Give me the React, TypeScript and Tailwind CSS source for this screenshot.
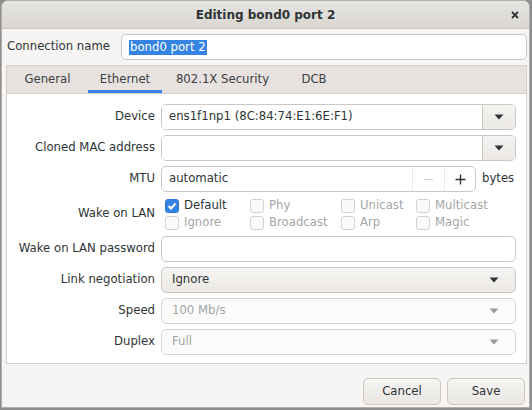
import React from "react";

const font = { fontFamily: '"DejaVu Sans", "Liberation Sans", sans-serif' };

const Arrow = ({ grey }: { grey?: boolean }) => (
  <svg width="10" height="6" viewBox="0 0 10 6">
    <path d="M0.5 0.5 L9.5 0.5 L5 5.5 Z" fill={grey ? "#9a9a98" : "#2e3436"} />
  </svg>
);

const Check = ({ on, label, disabled }: { on?: boolean; label: string; disabled?: boolean }) => (
  <div className="flex items-center gap-[5px] h-[17px]">
    {on ? (
      <div className="w-[14px] h-[14px] rounded-[3px] bg-[#3584e4] border border-[#2a76d6] flex items-center justify-center">
        <svg width="10" height="10" viewBox="0 0 10 10">
          <path d="M1.5 5 L4 7.5 L8.5 2.5" stroke="white" strokeWidth="2" fill="none" />
        </svg>
      </div>
    ) : (
      <div className="w-[14px] h-[14px] rounded-[3px] bg-[#fafafa] border border-[#d6d1cd]" />
    )}
    <span className={disabled ? "text-[#a3a6a6]" : "text-[#2e3436]"}>{label}</span>
  </div>
);

const Label = ({ children }: { children: React.ReactNode }) => (
  <div className="flex items-center justify-end text-[#2e3436]">{children}</div>
);

const tabs = [
  { name: "General", w: "w-[81px]" },
  { name: "Ethernet", w: "w-[74px]" },
  { name: "802.1X Security", w: "w-[121px]" },
  { name: "DCB", w: "w-[62px]" },
];

export default function App() {
  return (
    <div className="w-[532px] h-[410px] bg-[#8e8e8e] overflow-hidden text-[11.7px]" style={font}>
      <div className="ml-[1px] w-[529px] h-[408px] rounded-t-[7px] border border-[#b3aeaa] bg-[#f6f5f4] flex flex-col overflow-hidden">
        {/* title bar */}
        <div className="h-[28px] shrink-0 relative flex items-center justify-center bg-gradient-to-b from-[#e6e4e1] to-[#dad7d2] border-b border-[#c9c5c0]">
          <span className="font-bold text-[#2e3436] text-[12px]">Editing bond0 port 2</span>
          <svg className="absolute right-[10px] top-[10px]" width="8" height="8" viewBox="0 0 8 8">
            <path d="M1 1 L7 7 M7 1 L1 7" stroke="#2e3436" strokeWidth="1.8" />
          </svg>
        </div>

        <div className="flex-1 flex flex-col pl-[4px] pr-[2px]">
          {/* connection name */}
          <div className="mt-[5px] flex items-center h-[26px]">
            <div className="w-[115px] pl-[1px] text-[#2e3436]">Connection name</div>
            <div className="flex-1 h-[26px] rounded-[5px] border border-[#cdc7c2] bg-white flex items-center pl-[7px]">
              <span className="bg-[#3584e4] text-white leading-[15px] px-[1px]">bond0 port 2</span>
            </div>
          </div>

          {/* notebook */}
          <div className="mt-[5px] h-[299px] border border-[#d3cdcb] flex flex-col">
            <div className="h-[28px] shrink-0 bg-[#e7e1e0] border-b border-[#d3cdcb] flex">
              {tabs.map((t, i) => (
                <div
                  key={t.name}
                  className={`${t.w} h-full flex items-center justify-center text-[#3d4244] ${
                    i === 1 ? "border-b-[3px] border-[#3584e4] pt-[3px]" : ""
                  }`}
                >
                  {t.name}
                </div>
              ))}
            </div>

            <div className="flex-1 bg-white pt-[10px] pr-[10px] grid grid-cols-[148px_1fr] gap-x-[6px] gap-y-[5px] content-start">
              <Label>Device</Label>
              <div className="h-[26px] flex rounded-[5px] border border-[#cdc7c2] overflow-hidden">
                <div className="flex-1 bg-white flex items-center pl-[7px] text-[#2e3436]">ens1f1np1 (8C:84:74:E1:6E:F1)</div>
                <div className="w-[33px] border-l border-[#cdc7c2] bg-gradient-to-b from-[#f5f4f2] to-[#ebe8e5] flex items-center justify-center">
                  <Arrow />
                </div>
              </div>

              <Label>Cloned MAC address</Label>
              <div className="h-[26px] flex rounded-[5px] border border-[#cdc7c2] overflow-hidden">
                <div className="flex-1 bg-white" />
                <div className="w-[33px] border-l border-[#cdc7c2] bg-gradient-to-b from-[#f5f4f2] to-[#ebe8e5] flex items-center justify-center">
                  <Arrow />
                </div>
              </div>

              <Label>MTU</Label>
              <div className="h-[26px] flex items-center">
                <div className="w-[315px] h-full flex rounded-[5px] border border-[#cdc7c2] overflow-hidden bg-white">
                  <div className="flex-1 flex items-center pl-[7px] text-[#2e3436]">automatic</div>
                  <div className="w-[32px] border-l border-[#ebe8e5] flex items-center justify-center">
                    <div className="w-[9px] h-[1px] bg-[#cfcbc7]" />
                  </div>
                  <div className="w-[31px] border-l border-[#ebe8e5] flex items-center justify-center">
                    <svg width="11" height="11" viewBox="0 0 11 11">
                      <path d="M5.5 0.5 V10.5 M0.5 5.5 H10.5" stroke="#2e3436" strokeWidth="1.4" />
                    </svg>
                  </div>
                </div>
                <span className="ml-[6px] text-[#2e3436]">bytes</span>
              </div>

              <Label>Wake on LAN</Label>
              <div className="h-[34px] pl-[4px] grid grid-cols-[85px_91px_75px_auto]">
                <Check on label="Default" />
                <Check label="Phy" disabled />
                <Check label="Unicast" disabled />
                <Check label="Multicast" disabled />
                <Check label="Ignore" disabled />
                <Check label="Broadcast" disabled />
                <Check label="Arp" disabled />
                <Check label="Magic" disabled />
              </div>

              <Label>Wake on LAN password</Label>
              <div className="h-[26px] rounded-[5px] border border-[#cdc7c2] bg-white" />

              <Label>Link negotiation</Label>
              <div className="h-[26px] rounded-[5px] border border-[#cdc7c2] bg-gradient-to-b from-[#f6f5f3] to-[#ebe8e5] flex items-center justify-between pl-[10px] pr-[16px] text-[#2e3436]">
                <span>Ignore</span>
                <Arrow />
              </div>

              <Label>Speed</Label>
              <div className="h-[26px] rounded-[5px] border border-[#dad5d1] bg-[#fbfbfa] flex items-center justify-between pl-[10px] pr-[16px] text-[#a3a6a6]">
                <span>100 Mb/s</span>
                <Arrow grey />
              </div>

              <Label>Duplex</Label>
              <div className="h-[26px] rounded-[5px] border border-[#dad5d1] bg-[#fbfbfa] flex items-center justify-between pl-[10px] pr-[16px] text-[#a3a6a6]">
                <span>Full</span>
                <Arrow grey />
              </div>
            </div>
          </div>

          {/* buttons */}
          <div className="mt-[14px] mr-[2px] flex justify-end gap-[6px]">
            {["Cancel", "Save"].map((b) => (
              <div
                key={b}
                className="w-[78px] h-[27px] rounded-[5px] border border-[#cdc7c2] bg-gradient-to-b from-[#f6f5f3] to-[#e9e6e3] flex items-center justify-center text-[#2e3436]"
              >
                {b}
              </div>
            ))}
          </div>
        </div>
      </div>
    </div>
  );
}
